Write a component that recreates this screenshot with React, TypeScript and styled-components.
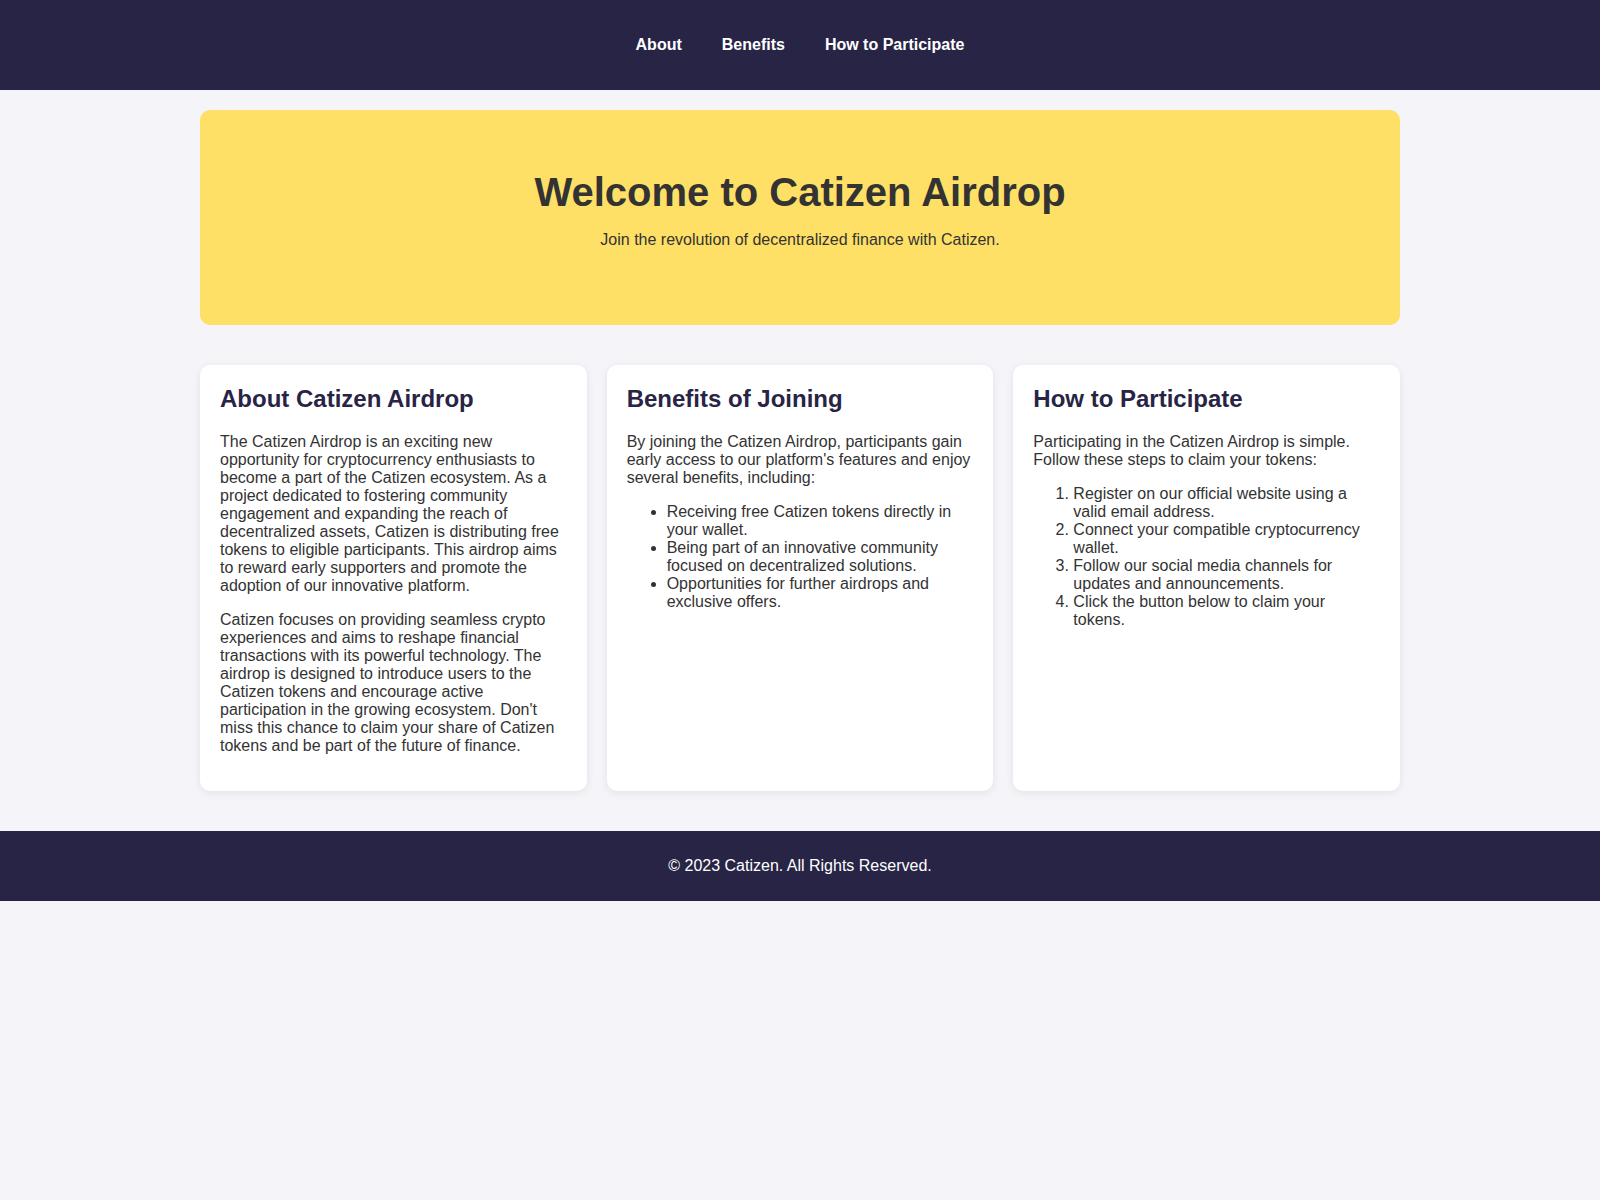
import React from 'react';
import styled, { createGlobalStyle } from 'styled-components';

const GlobalStyle = createGlobalStyle`
  body {
    margin: 0;
    background-color: #f4f4f9;
    color: #333;
    font-family: "Liberation Sans", Arial, sans-serif;
    font-size: 16px;
  }
`;

const Header = styled.header`
  background-color: #282445;
  padding: 20px 0;
`;

const NavList = styled.ul`
  list-style: none;
  margin: 16px 0;
  padding: 0;
  display: flex;
  justify-content: center;
  gap: 40px;
`;

const NavLink = styled.a`
  color: #fff;
  font-weight: bold;
  text-decoration: none;
  line-height: 18.4px;
`;

const Main = styled.main`
  max-width: 1200px;
  margin: 0 auto;
  padding: 20px 0 40px;
`;

const Hero = styled.section`
  background-color: #ffe066;
  border-radius: 10px;
  padding: 59px 20px 76px;
  text-align: center;
`;

const HeroTitle = styled.h1`
  font-size: 40px;
  line-height: 46px;
  margin: 0 0 16px;
  color: #333;
`;

const HeroText = styled.p`
  margin: 0;
  line-height: 18px;
`;

const CardGrid = styled.div`
  display: grid;
  grid-template-columns: repeat(3, 1fr);
  gap: 20px;
  margin-top: 40px;
`;

const Card = styled.section`
  background-color: #fff;
  border-radius: 10px;
  padding: 20px;
  box-shadow: 0 2px 8px rgba(0, 0, 0, 0.08);
`;

const CardTitle = styled.h2`
  font-size: 24px;
  line-height: 27.6px;
  color: #282445;
  margin: 0 0 20px;
`;

const Text = styled.p`
  margin: 16px 0;
  line-height: 18px;
`;

const BulletList = styled.ul`
  margin: 16px 0;
  padding-left: 40px;
  line-height: 18px;
`;

const StepList = styled.ol`
  margin: 16px 0;
  padding-left: 40px;
  line-height: 18px;
`;

const Footer = styled.footer`
  background-color: #282445;
  color: #fff;
  text-align: center;
  padding: 10px 0;
`;

const FooterText = styled.p`
  margin: 16px 0;
  line-height: 18.4px;
`;

const App: React.FC = () => (
  <>
    <GlobalStyle />
    <Header>
      <nav>
        <NavList>
          <li><NavLink href="#about">About</NavLink></li>
          <li><NavLink href="#benefits">Benefits</NavLink></li>
          <li><NavLink href="#participate">How to Participate</NavLink></li>
        </NavList>
      </nav>
    </Header>
    <Main>
      <Hero>
        <HeroTitle>Welcome to Catizen Airdrop</HeroTitle>
        <HeroText>Join the revolution of decentralized finance with Catizen.</HeroText>
      </Hero>
      <CardGrid>
        <Card id="about">
          <CardTitle>About Catizen Airdrop</CardTitle>
          <Text>
            The Catizen Airdrop is an exciting new opportunity for cryptocurrency enthusiasts to become a part of the Catizen
            ecosystem. As a project dedicated to fostering community engagement and expanding the reach of decentralized
            assets, Catizen is distributing free tokens to eligible participants. This airdrop aims to reward early
            supporters and promote the adoption of our innovative platform.
          </Text>
          <Text>
            Catizen focuses on providing seamless crypto experiences and aims to reshape financial transactions with its
            powerful technology. The airdrop is designed to introduce users to the Catizen tokens and encourage active
            participation in the growing ecosystem. Don't miss this chance to claim your share of Catizen tokens and be
            part of the future of finance.
          </Text>
        </Card>
        <Card id="benefits">
          <CardTitle>Benefits of Joining</CardTitle>
          <Text>
            By joining the Catizen Airdrop, participants gain early access to our platform's features and enjoy several
            benefits, including:
          </Text>
          <BulletList>
            <li>Receiving free Catizen tokens directly in your wallet.</li>
            <li>Being part of an innovative community focused on decentralized solutions.</li>
            <li>Opportunities for further airdrops and exclusive offers.</li>
          </BulletList>
        </Card>
        <Card id="participate">
          <CardTitle>How to Participate</CardTitle>
          <Text>Participating in the Catizen Airdrop is simple. Follow these steps to claim your tokens:</Text>
          <StepList>
            <li>Register on our official website using a valid email address.</li>
            <li>Connect your compatible cryptocurrency wallet.</li>
            <li>Follow our social media channels for updates and announcements.</li>
            <li>Click the button below to claim your tokens.</li>
          </StepList>
        </Card>
      </CardGrid>
    </Main>
    <Footer>
      <FooterText>© 2023 Catizen. All Rights Reserved.</FooterText>
    </Footer>
  </>
);

export default App;
